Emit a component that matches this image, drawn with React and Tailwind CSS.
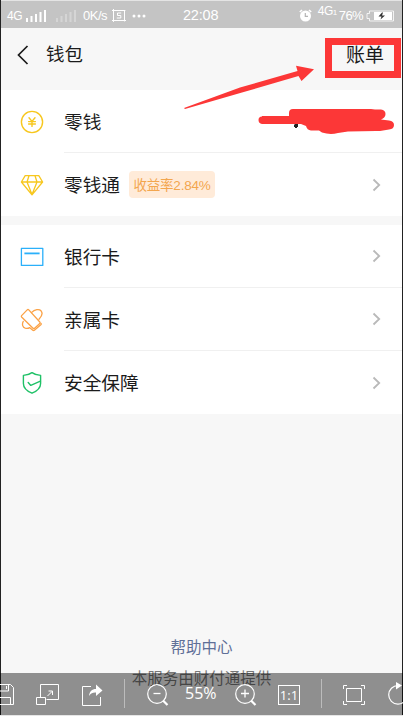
import clsx from 'clsx';

const iconProps = {
  fill: 'none',
  stroke: 'currentColor',
  strokeLinecap: 'round',
  strokeLinejoin: 'round',
};

const renderRowIcon = (key) => {
  switch (key) {
    case 'change':
      return (
        <svg className="w-6 h-6 text-[#f7c71e]" viewBox="0 0 24 24" strokeWidth="1.4" {...iconProps}>
          <circle cx="12" cy="12" r="10.6" />
          <path d="M9 7.8l3 3.6 3-3.6M12 11.4v5M8.6 11.6h6.8M8.6 14h6.8" />
        </svg>
      );
    case 'fund':
      return (
        <svg className="w-6 h-6 text-[#f7c71e]" viewBox="0 0 24 24" strokeWidth="1.3" {...iconProps}>
          <path d="M5.2 2.6h13.6l3.8 6.4L12 21.8 1.4 9zM1.400 9h21.200M7 9l5 12.600L17 9M7 9l2-6.200M17 9l-2-6.200" />
        </svg>
      );
    case 'bank':
      return (
        <svg className="w-6 h-6 text-[#2bb0fa]" viewBox="0 0 24 24" strokeWidth="1.3" {...iconProps}>
          <rect x="1.4" y="3.4" width="21.4" height="17" />
          <path d="M4.4 8.4h15.2" strokeWidth="1.8" strokeLinecap="butt" />
        </svg>
      );
    case 'family':
      return (
        <svg className="w-6 h-6 text-[#fba246]" viewBox="0 0 24 24" strokeWidth="1.3" {...iconProps}>
          <path d="M1.600 7.600L7.200 1.900q.8-.8 1.600 0L19.800 14q.7.800 0 1.600L14.600 20.200q-.8.700-1.600 0L1.600 9q-.6-.7 0-1.400z" />
          <path d="M11.400 4.600C14.800 1.200 19.200.8 21 2.800c1.800 2.200.8 5.600-2 8.400M3.200 13.400c-1.400 3-.6 6 2 6.800 1.600.4 3.200.2 4.600-.6M10.400 20.200l2.400 2q.8.600 1.600 0l6.400-5.400q.7-.7.200-1.400" />
        </svg>
      );
    case 'security':
      return (
        <svg className="w-6 h-6 text-[#1fc167]" viewBox="0 0 24 24" strokeWidth="1.4" {...iconProps}>
          <path d="M12 1.6c2.6 2 5.4 2.6 8.6 2.8v8c0 4.600-3.600 7.600-8.600 9.800-5-2.200-8.600-5.200-8.600-9.800v-8C6.600 4.200 9.400 3.600 12 1.600z" />
          <path d="M8.200 11.600l2.600 2.800 9.600-4.200" />
        </svg>
      );
    default:
      return null;
  }
};

const groups = [
  [
    { key: 'change', label: '零钱' },
    { key: 'fund', label: '零钱通', tag: '收益率2.84%', arrow: true },
  ],
  [
    { key: 'bank', label: '银行卡', arrow: true },
    { key: 'family', label: '亲属卡', arrow: true },
    { key: 'security', label: '安全保障', arrow: true },
  ],
];

const Signal = ({ className }) => (
  <svg className={className} width="21" height="12" viewBox="0 0 21 12" fill="currentColor">
    <path d="M0 8h2v4H0zM4.500 6h2v6h-2zM9 4h2v8H9zM13.500 2h2v10h-2zM18 0h2v12h-2z" />
  </svg>
);

const StatusBar = () => (
  <div className="h-7 shrink-0 border-t border-[#e4e4e4] bg-[#c4c4c4] text-white flex items-center pt-[2px] pl-[6px] pr-[7px] leading-none whitespace-nowrap">
    <span className="w-[19px] pt-px text-[12px] tracking-[-0.5px]">4G</span>
    <Signal />
    <Signal className="ml-[9px] opacity-30" />
    <span className="ml-[6px] w-[26px] text-[13px] tracking-[-0.5px]">0K/s</span>
    <svg className="ml-[3px]" width="14" height="13" viewBox="0 0 14 13" {...iconProps}>
      <path d="M0 1.500h13M1.500 0v12.500M0 11.500h14M12.500 1.500V12" />
      <path d="M8.800 4H5.500v2.500h3.300V9H5.200" />
    </svg>
    <svg className="ml-[6px]" width="14" height="4" viewBox="0 0 14 4" fill="currentColor">
      <circle cx="2" cy="2" r="1.500" />
      <circle cx="7" cy="2" r="1.500" />
      <circle cx="12" cy="2" r="1.500" />
    </svg>
    <span className="ml-[37px] text-[14.500px] tracking-[-0.2px]">22:08</span>
    <svg className="ml-auto" width="13" height="13" viewBox="0 0 13 13">
      <circle cx="6.500" cy="7" r="5.500" fill="#fff" />
      <path d="M.8 3L3 1M12.200 3L10 1" stroke="#fff" strokeWidth="1.600" />
      <path d="M6.300 4v3.300H9" stroke="#b5b5b5" strokeWidth="1.200" fill="none" />
    </svg>
    <span className="ml-[6px] w-[21px] pb-[10px] text-[12px] tracking-[-0.5px]">4G<span className="text-[8px]">1</span></span>
    <span className="text-[13px] tracking-[-0.6px]">76%</span>
    <svg className="ml-[3px]" width="29" height="12" viewBox="0 0 29 12">
      <path d="M3.500 1h24v10h-24V8.500H1v-5h2.500z" fill="none" stroke="#fff" strokeOpacity=".8" />
      <path d="M8 2h18v8H8z" fill="#fff" />
      <path d="M16 2.500L12.500 6.500h3L14.500 9.500l4.500-4h-3l1-3z" fill="#333" />
    </svg>
  </div>
);

const Row = ({ item, last }) => (
  <div className="h-[63px] flex items-center pl-[19px]">
    {renderRowIcon(item.key)}
    <div className={clsx('h-full flex-1 ml-[20px] pr-[21px] flex items-center', !last && 'border-b border-[#f0f0f0]')}>
      <span className="pt-[4px] text-[18.700px] leading-none">{item.label}</span>
      {item.tag && (
        <span className="ml-[9px] h-[27px] w-[86px] pt-[3px] rounded-[4px] bg-[#ffebd9] text-[#f3a64e] text-[13.500px] leading-none tracking-[-0.2px] flex items-center justify-center whitespace-nowrap">
          {item.tag}
        </span>
      )}
      {item.arrow && (
        <svg className="ml-auto text-[#b9b9b9]" width="9" height="14" viewBox="0 0 9 14" fill="none" stroke="currentColor" strokeWidth="1.800">
          <path d="M1.500 1.500L7.200 7l-5.700 5.500" />
        </svg>
      )}
    </div>
  </div>
);

const Toolbar = () => (
  <div className="absolute left-0 right-0 bottom-px h-[42px] bg-black/42 text-white overflow-hidden">
    <div className="h-full pt-[2px] flex items-center whitespace-nowrap">
      <svg className="shrink-0 -ml-[7px]" width="22" height="22" viewBox="0 0 22 22" fill="none" stroke="currentColor">
        <path d="M.500.500h17l3 3v17H.500zM4.500.500v6.500h11V.500M13.500 2v3M4.500 20.500v-7h13v7" />
      </svg>
      <svg className="shrink-0 ml-[21px]" width="24" height="22" viewBox="0 0 24 22" fill="none" stroke="currentColor">
        <path d="M4.500 13.500V.500h18v15h-12M.500 13.500h9v7h-9zM11.500 12l4.500-4.500M12.500 7h4v4" />
      </svg>
      <svg className="shrink-0 ml-[22px] -mt-[2px]" width="21" height="23" viewBox="0 0 21 23" fill="none" stroke="currentColor">
        <path d="M9 3.500H.500v19h18V14" />
        <path d="M7 13c.500-4.500 3-7 7-7V1.500l6.500 6-6.500 5.500V9.500c-3-.200-5 .500-7 3.500z" fill="currentColor" stroke="none" />
      </svg>
      <div className="w-px h-[29px] bg-white/40 ml-[21px] -mt-[3px] shrink-0" />
      <svg className="shrink-0 ml-[22px]" width="22" height="23" viewBox="0 0 22 23" fill="none" stroke="currentColor">
        <circle cx="10" cy="10" r="9.300" strokeWidth="1.200" />
        <path d="M6.500 9.500h7" strokeWidth="1.300" />
        <path d="M16 16.500l4.500 4.500" strokeWidth="2.200" />
      </svg>
      <span className="shrink-0 w-[34px] ml-[16px] -mt-[4px] text-[16px] leading-none font-['Open_Sans','Noto_Sans',sans-serif]">55%</span>
      <svg className="shrink-0 ml-[16px]" width="22" height="23" viewBox="0 0 22 23" fill="none" stroke="currentColor">
        <circle cx="10" cy="10" r="9.300" strokeWidth="1.200" />
        <path d="M6 9.500h8M10 5.500v8" strokeWidth="1.300" />
        <path d="M16 16.500l4.500 4.500" strokeWidth="2.200" />
      </svg>
      <span className="shrink-0 ml-[21px] w-[22px] h-[20px] border border-white text-[13px] leading-none flex items-center justify-center font-['Open_Sans',sans-serif]">1:1</span>
      <div className="w-px h-[29px] bg-white/40 ml-[21px] -mt-[3px] shrink-0" />
      <svg className="shrink-0 ml-[21px]" width="22" height="20" viewBox="0 0 22 20" fill="none" stroke="currentColor">
        <path d="M.500 4V.500H4M18 .500h3.500V4M21.500 16v3.500H18M4 19.500H.500V16M3.500 3.500h15v13h-15z" />
      </svg>
      <svg className="shrink-0 ml-[22px] -mt-[2px]" width="22" height="24" viewBox="0 0 22 24" fill="none" stroke="currentColor">
        <path d="M11 3.500A9.300 9.300 0 1 0 20.300 13" strokeWidth="1.200" />
        <path d="M9 0l6 3.500L9 7.500z" fill="currentColor" stroke="none" />
      </svg>
    </div>
  </div>
);

// red marker strokes drawn over the page
const Markup = () => (
  <svg className="absolute inset-0 pointer-events-none" width="403" height="716" viewBox="0 0 403 716">
    <rect x="328.500" y="41.500" width="69" height="33" fill="none" stroke="#fc3737" strokeWidth="7" />
    <path d="M184 108L240 87.500l57.500-16.500L296 65.800l18 3.500L301.500 81l-3-5L242 92.500 185 109z" fill="#fc3737" />
    <path d="M295 124h3v3h-1v1h-2v-1h-1v-2z" fill="#222" />
    <path d="M262 116h27v-3q0-4 4-4h78l4 .500h6q4.500.500 4.500 4.500 0 3.500-4.500 5.500l8 1q5 .500 5 4.500t-5 4.500l-9 1.500h-4l-28 .500-10 1.500q-8 2-16-.500l-3-2h-8q-4-.500-5-4.500l-5-2H262q-3.500-.500-3.500-4t3.500-3.500z" fill="#fc3737" />
  </svg>
);

export default function App() {
  return (
    <div className="relative w-[403px] h-[716px] overflow-hidden bg-[#f7f7f7] text-[#1b1b1b] font-['Liberation_Sans','Noto_Sans_CJK_SC',sans-serif]">
      <div className="h-full flex flex-col border-l border-r border-[#222]">
        <StatusBar />

        <header className="h-[62px] shrink-0 flex items-center justify-between pl-[16px] pr-[18px] pb-[8px]">
          <div className="flex items-center">
            <svg width="12" height="20" viewBox="0 0 12 20" fill="none" stroke="currentColor" strokeWidth="1.700">
              <path d="M10.500 1L1.500 10l9 9" />
            </svg>
            <span className="ml-[17px] text-[18.500px] leading-none">钱包</span>
          </div>
          <span className="pt-px text-[19px] leading-none">账单</span>
        </header>

        <main className="flex flex-col gap-[9px]">
          {groups.map((items, i) => (
            <section key={i} className="bg-white">
              {items.map((item, j) => (
                <Row key={item.key} item={item} last={j === items.length - 1} />
              ))}
            </section>
          ))}
        </main>

        <footer className="mt-auto pb-[30px] flex flex-col items-center gap-[15px] leading-none">
          <span className="text-[15.500px] text-[#5f6f98]">帮助中心</span>
          <span className="text-[15.500px] text-[#777]">本服务由财付通提供</span>
        </footer>
      </div>
      <Toolbar />
      <Markup />
      <div className="absolute bottom-0 inset-x-0 h-px bg-[#e6e6e6]" />
    </div>
  );
}
